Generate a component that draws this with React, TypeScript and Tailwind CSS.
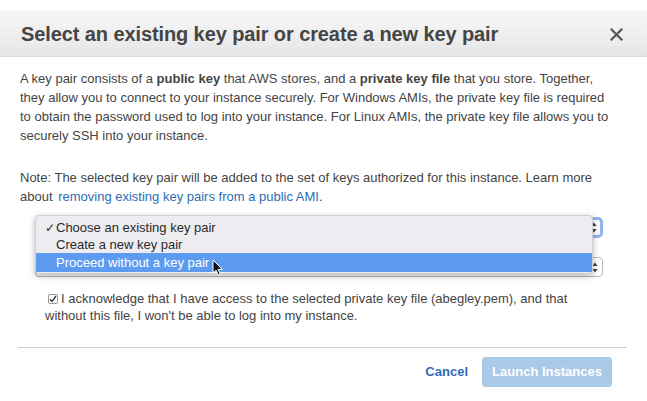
import React from "react";

function Arrows() {
  return (
    <svg width="6" height="11" viewBox="0 0 6 11" className="block">
      <path d="M3 0.5 L5.6 4 L0.4 4 Z" fill="#444" />
      <path d="M3 10.5 L5.6 7 L0.4 7 Z" fill="#444" />
    </svg>
  );
}

function Cursor() {
  return (
    <svg width="12" height="17" viewBox="0 0 12 17">
      <path
        d="M1 1 L1 14 L4 11 L6.3 16 L8.3 15.1 L6.1 10.3 L10.3 10.3 Z"
        fill="#111"
        stroke="#fff"
        strokeWidth="1"
        strokeLinejoin="round"
      />
    </svg>
  );
}

export default function App() {
  return (
    <div
      className="w-[647px] h-[401px] bg-white relative overflow-hidden text-[#444]"
      style={{ fontFamily: '"Liberation Sans", Arial, sans-serif' }}
    >
      {/* Header */}
      <div className="mt-[10px] h-[47px] bg-gradient-to-b from-[#f8f8f8] to-[#e6e6e6] border-b border-[#dadada] flex items-center justify-between pl-[21px] pr-[24px]">
        <div className="text-[20px] font-bold text-[#454545] tracking-[-0.1px] pt-[1px]">
          Select an existing key pair or create a new key pair
        </div>
        <svg width="13" height="13" viewBox="0 0 13 13" className="mt-[2px]">
          <path d="M1.5 1.5 L11.5 11.5 M11.5 1.5 L1.5 11.5" stroke="#555" strokeWidth="2.2" strokeLinecap="square" />
        </svg>
      </div>

      {/* Body */}
      <div className="px-[20px] pt-[12px] text-[13px] leading-[19px]">
        <p>
          A key pair consists of a <b>public key</b> that AWS stores, and a <b>private key file</b> that you store. Together,
          <br />
          they allow you to connect to your instance securely. For Windows AMIs, the private key file is required
          <br />
          to obtain the password used to log into your instance. For Linux AMIs, the private key file allows you to
          <br />
          securely SSH into your instance.
        </p>
        <p className="mt-[23px]">
          Note: The selected key pair will be added to the set of keys authorized for this instance. Learn more
          <br />
          about <span className="ml-[2px] text-[#2e6db4]">removing existing key pairs from a public AMI</span>.
        </p>
      </div>

      {/* Selects with open menu */}
      <div className="relative ml-[35px] w-[568px] mt-[11px]">
        <div className="h-[21px] rounded-[5px] border-[3px] border-[#8db4ee] bg-white flex items-center justify-end pr-[3px]">
          <Arrows />
        </div>
        <div className="mt-[19px] h-[20px] rounded-[4px] border border-[#b8b8b8] bg-white flex items-center justify-end pr-[4px]">
          <Arrows />
        </div>

        {/* Dropdown menu overlay */}
        <div className="absolute left-0 top-[-2px] w-[558px] h-[59px] bg-[#ededf1] rounded-[4px] shadow-[0_2px_6px_rgba(0,0,0,0.3)] border border-[#d0d0d4] pt-[3px] text-[13px] text-[#2a2a2a]">
          <div className="h-[17px] flex items-center">
            <span className="w-[20px] pl-[9px] text-[12px]">✓</span>
            <span>Choose an existing key pair</span>
          </div>
          <div className="h-[17px] flex items-center pl-[20px]">Create a new key pair</div>
          <div className="h-[19px] flex items-center pl-[20px] bg-[#5c9bf0] text-white">Proceed without a key pair</div>
        </div>

        <div className="absolute left-[177px] top-[42px]">
          <Cursor />
        </div>
      </div>

      {/* Acknowledge */}
      <div className="mt-[13px] pl-[45px] pr-[20px] text-[13px] leading-[17px]">
        <div className="flex items-center">
          <span className="ml-[3px] mr-[3px] w-[10px] h-[10px] border border-[#9a9a9a] rounded-[2px] bg-white flex items-center justify-center">
            <svg width="8" height="8" viewBox="0 0 8 8">
              <path d="M1 4.2 L3 6.4 L7 1" stroke="#333" strokeWidth="1.3" fill="none" />
            </svg>
          </span>
          <span>I acknowledge that I have access to the selected private key file (abegley.pem), and that</span>
        </div>
        <div>without this file, I won't be able to log into my instance.</div>
      </div>

      {/* Divider */}
      <div className="ml-[18px] w-[609px] mt-[23px] border-t border-[#cfcfcf]" />

      {/* Footer */}
      <div className="flex items-center justify-end pr-[35px] mt-[9px]">
        <span className="text-[13px] font-bold text-[#2f6db5] mr-[14px]">Cancel</span>
        <div className="w-[130px] h-[30px] rounded-[4px] bg-[#a9c9e8] text-white text-[13px] font-bold flex items-center justify-center">
          Launch Instances
        </div>
      </div>
    </div>
  );
}
